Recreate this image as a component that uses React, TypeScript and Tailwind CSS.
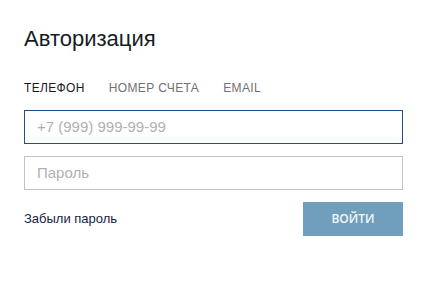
export default function App() {
  return (
    <div className="w-[427px] h-[287px] bg-white px-6 pt-[26px]" style={{ fontFamily: '"Liberation Sans", Arial, sans-serif' }}>
      <h1 className="text-[22px] leading-[26px] text-[#151b26]">Авторизация</h1>
      <div className="mt-[29px] flex gap-[24px] text-[12px] leading-[14px] uppercase tracking-[0.35px]">
        <span className="text-[#1a1a1a]">Телефон</span>
        <span className="text-[#707070]">Номер счета</span>
        <span className="text-[#707070]">Email</span>
      </div>
      <div className="mt-[15px] flex flex-col gap-[12px]">
        <div className="h-[34px] border border-[#1f4f88] flex items-center px-3 text-[15px] text-[#b0b0b0]">+7 (999) 999-99-99</div>
        <div className="h-[34px] border border-[#c4c4c4] flex items-center px-3 text-[15px] text-[#b0b0b0]">Пароль</div>
      </div>
      <div className="mt-[12px] flex items-center justify-between">
        <span className="text-[13px] text-[#142444]">Забыли пароль</span>
        <div className="w-[100px] h-[34px] bg-[#6f9fbb] flex items-center justify-center text-[12px] font-semibold text-[#f4f7fa]" style={{ fontFamily: '"Open Sans", sans-serif' }}>ВОЙТИ</div>
      </div>
    </div>
  );
}
